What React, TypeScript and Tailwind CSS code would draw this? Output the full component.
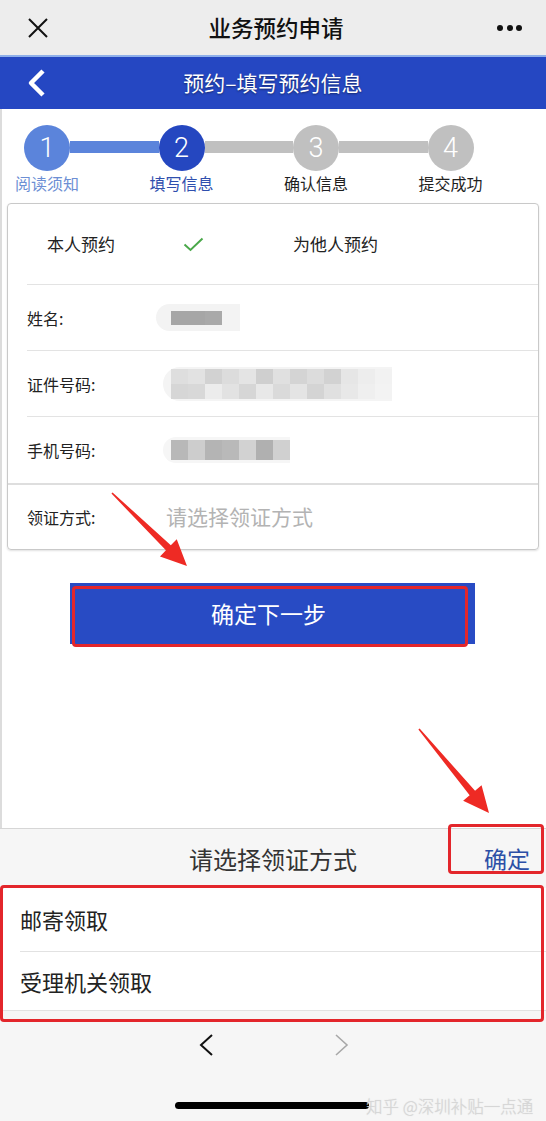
import React from "react";

// Builds an arrow polygon: thin tail widening toward a triangular head
function arrowPoints(x1: number, y1: number, x2: number, y2: number) {
  const dx = x2 - x1;
  const dy = y2 - y1;
  const len = Math.hypot(dx, dy);
  const ux = dx / len;
  const uy = dy / len;
  const nx = -uy;
  const ny = ux;
  const head = 26;
  const headW = 12;
  const shaftEnd = 3.5;
  const bx = x2 - ux * head;
  const by = y2 - uy * head;
  const pts = [
    [x1 + nx * 0.8, y1 + ny * 0.8],
    [bx + nx * shaftEnd, by + ny * shaftEnd],
    [bx + nx * headW, by + ny * headW],
    [x2, y2],
    [bx - nx * headW, by - ny * headW],
    [bx - nx * shaftEnd, by - ny * shaftEnd],
    [x1 - nx * 0.8, y1 - ny * 0.8],
  ];
  return pts.map((p) => p.join(",")).join(" ");
}

const steps = [
  { n: "1", label: "阅读须知", circle: "bg-[#5b84db]", text: "text-[#6d8fd4]" },
  { n: "2", label: "填写信息", circle: "bg-[#2547c0]", text: "text-[#2f4fae]" },
  { n: "3", label: "确认信息", circle: "bg-[#c0c0c0]", text: "text-[#1f1f1f]" },
  { n: "4", label: "提交成功", circle: "bg-[#c0c0c0]", text: "text-[#1f1f1f]" },
];

// Pixelated blur blocks standing in for hidden personal data
function Mosaic({ cells, rows = 1, h }: { cells: string[][]; rows?: number; h: number }) {
  return (
    <div className="flex flex-col">
      {Array.from({ length: rows }).map((_, r) => (
        <div key={r} className="flex">
          {cells[r].map((c, i) => (
            <div key={i} className={`w-[17px] ${c}`} style={{ height: h }} />
          ))}
        </div>
      ))}
    </div>
  );
}

export default function App() {
  return (
    <div
      className="relative w-[546px] h-[1121px] overflow-hidden bg-white flex flex-col"
      style={{ fontFamily: '"Noto Sans CJK SC", "Noto Sans", sans-serif' }}
    >
      {/* WeChat title bar */}
      <div className="h-[55px] bg-[#ededed] flex items-center pl-[27px] pr-[24px] shrink-0">
        <div className="w-[70px]">
          <svg width="22" height="22" viewBox="0 0 22 22">
            <path d="M2 2 L20 20 M20 2 L2 20" stroke="#111" strokeWidth="2" />
          </svg>
        </div>
        <div className="flex-1 text-center text-[22.5px] font-medium text-[#111] ml-[3px]">业务预约申请</div>
        <div className="w-[70px] flex justify-end gap-[3.5px]">
          <span className="w-[6px] h-[6px] rounded-full bg-[#111]" />
          <span className="w-[6px] h-[6px] rounded-full bg-[#111]" />
          <span className="w-[6px] h-[6px] rounded-full bg-[#111]" />
        </div>
      </div>

      {/* Blue page header */}
      <div className="h-[54px] bg-[#2547c2] border-t-[2px] border-[#8fb0ea] flex items-center relative shrink-0">
        <svg width="24" height="30" viewBox="0 0 24 30" className="absolute left-[24px] top-[11px]">
          <path d="M19 3 L7 15 L19 27" stroke="#fff" strokeWidth="4.5" fill="none" strokeLinejoin="round" />
        </svg>
        <div
          className="flex-1 text-center text-[21px] text-white"
          style={{ textShadow: "0 1px 2px rgba(0,0,0,0.45)" }}
        >
          预约–填写预约信息
        </div>
      </div>

      {/* Body */}
      <div className="flex-1 flex flex-col border-l-[2px] border-[#dcdcdc]">
        {/* Stepper */}
        <div className="h-[94px] pt-[16px] pl-[22px] shrink-0">
          <div className="flex items-start">
            {steps.map((s, i) => (
              <React.Fragment key={s.n}>
                {i > 0 && (
                  <div
                    className={`h-[12px] w-[88.5px] mt-[16px] ${
                      i === 1 ? "bg-[#5b84db]" : "bg-[#c0c0c0]"
                    }`}
                  />
                )}
                <div className="flex flex-col items-center w-[46px]">
                  <div
                    className={`w-[46px] h-[46px] rounded-full flex items-center justify-center text-white text-[27px] font-light leading-none ${s.circle}`}
                    style={{ fontFamily: 'Roboto, "Liberation Sans", sans-serif' }}
                  >
                    {s.n}
                  </div>
                  <div className={`mt-[1px] text-[16px] whitespace-nowrap leading-[22px] ${s.text}`}>{s.label}</div>
                </div>
              </React.Fragment>
            ))}
          </div>
        </div>

        {/* Form card */}
        <div className="mx-[5px] w-[532px] h-[347px] border border-[#c9c9c9] rounded-[4px] shadow-[0_1px_2px_rgba(0,0,0,0.12)] flex flex-col">
          <div className="h-[80px] flex items-center text-[17px] text-[#222]">
            <span className="ml-[39px]">本人预约</span>
            <svg width="21" height="15" viewBox="0 0 21 15" className="ml-[68px]">
              <path d="M1.5 7.5 L7.5 13 L19.5 1.5" stroke="#4aa84a" strokeWidth="2" fill="none" />
            </svg>
            <span className="ml-[89px]">为他人预约</span>
          </div>

          <div className="ml-[19px] border-t border-[#e3e3e3] h-[66px] flex items-center">
            <span className="w-[129px] text-[16px] text-[#222]">姓名:</span>
            <div className="flex items-center bg-[#f3f3f3] rounded-l-full h-[27px] pl-[15px] pr-[18px]">
              <Mosaic h={14} cells={[["bg-[#a6a6a6]", "bg-[#a6a6a6]", "bg-[#a9a9a9]"]]} />
            </div>
          </div>

          <div className="ml-[19px] border-t border-[#e3e3e3] h-[66px] flex items-center">
            <span className="w-[136px] text-[16px] text-[#222]">证件号码:</span>
            <div className="bg-[#f4f4f4] rounded-l-full pl-[8px] py-[2px]">
              <Mosaic
                h={15}
                rows={2}
                cells={[
                  ["bg-[#dedede]", "bg-[#e2e2e2]", "bg-[#d2d2d2]", "bg-[#dcdcdc]", "bg-[#e4e4e4]", "bg-[#cfcfcf]", "bg-[#e0e0e0]", "bg-[#d4d4d4]", "bg-[#dcdcdc]", "bg-[#d2d2d2]", "bg-[#e6e6e6]", "bg-[#ededed]", "bg-[#f2f2f2]"],
                  ["bg-[#d6d6d6]", "bg-[#d8d8d8]", "bg-[#ececec]", "bg-[#e2e2e2]", "bg-[#d6d6d6]", "bg-[#e8e8e8]", "bg-[#dadada]", "bg-[#e4e4e4]", "bg-[#d4d4d4]", "bg-[#e0e0e0]", "bg-[#e8e8e8]", "bg-[#efefef]", "bg-[#f3f3f3]"],
                ]}
              />
            </div>
          </div>

          <div className="ml-[19px] border-t border-[#e3e3e3] h-[67px] flex items-center">
            <span className="w-[136px] text-[16px] text-[#222]">手机号码:</span>
            <div className="bg-[#f6f6f6] rounded-l-full pl-[8px] py-[3px]">
              <Mosaic
                h={20}
                cells={[["bg-[#b8b8b8]", "bg-[#cdcdcd]", "bg-[#b4b4b4]", "bg-[#b9b9b9]", "bg-[#d2d2d2]", "bg-[#b0b0b0]", "bg-[#d0d0d0]"]]}
              />
            </div>
          </div>

          <div className="border-t-[2px] border-[#dedede] flex-1 flex items-center pl-[19px]">
            <span className="w-[139px] text-[16px] text-[#222]">领证方式:</span>
            <span className="text-[21px] text-[#b3b3b3]">请选择领证方式</span>
          </div>
        </div>

        {/* Next step button */}
        <div className="pt-[33px] pl-[68px]">
          <div className="w-[405px] h-[61px] bg-[#284bc4] flex items-center justify-center text-white text-[23px]">
            <span className="-ml-[8px]">确定下一步</span>
          </div>
        </div>
        <div className="flex-1" />
      </div>

      {/* Bottom picker sheet */}
      <div className="shrink-0 bg-[#f6f6f6] border-t border-[#d6d6d6]">
        <div className="h-[59px] flex items-center relative">
          <div className="flex-1 text-center text-[24px] text-[#333]">请选择领证方式</div>
          <div className="absolute right-[16px] top-[12px] text-[23px] text-[#2c4fa6]">确定</div>
        </div>
        <div className="bg-white">
          <div className="h-[63px] flex items-center pl-[20px] text-[22px] text-[#222]">邮寄领取</div>
          <div className="ml-[20px] border-t border-[#e2e2e2] h-[59px] flex items-center text-[22px] text-[#222]">
            受理机关领取
          </div>
        </div>
        <div className="h-[111px] border-t border-[#e2e2e2] relative">
          <div className="flex items-center pt-[22px] pl-[198px] gap-[120px]">
            <svg width="16" height="24" viewBox="0 0 16 24">
              <path d="M14 2 L3 12 L14 22" stroke="#111" strokeWidth="2" fill="none" />
            </svg>
            <svg width="16" height="24" viewBox="0 0 16 24">
              <path d="M2 2 L13 12 L2 22" stroke="#a8a8a8" strokeWidth="1.6" fill="none" />
            </svg>
          </div>
          <div className="absolute left-[175px] top-[91px] w-[194px] h-[7px] rounded-full bg-black" />
          <div
            className="absolute left-[366px] top-[83px] text-[16.5px] font-light text-[#d6d6d6]"
            style={{ textShadow: "0 0 1px rgba(120,120,120,0.25)" }}
          >
            知乎 @深圳补贴一点通
          </div>
        </div>
      </div>

      {/* Red annotation overlays */}
      <div className="absolute left-[72px] top-[586px] w-[396px] h-[61px] border-[3px] border-[#e3262b] rounded-[4px]" />
      <div className="absolute left-[448px] top-[824px] w-[96px] h-[50px] border-[3px] border-[#e3262b] rounded-[4px]" />
      <div className="absolute left-0 top-[885px] w-[544px] h-[137px] border-[3px] border-[#e3262b] rounded-[4px]" />
      <svg className="absolute left-0 top-0 pointer-events-none" width="546" height="1121">
        <polygon points={arrowPoints(112, 493, 187, 566)} fill="#ee2a24" />
        <polygon points={arrowPoints(419, 729, 489, 813)} fill="#ee2a24" />
      </svg>
    </div>
  );
}
